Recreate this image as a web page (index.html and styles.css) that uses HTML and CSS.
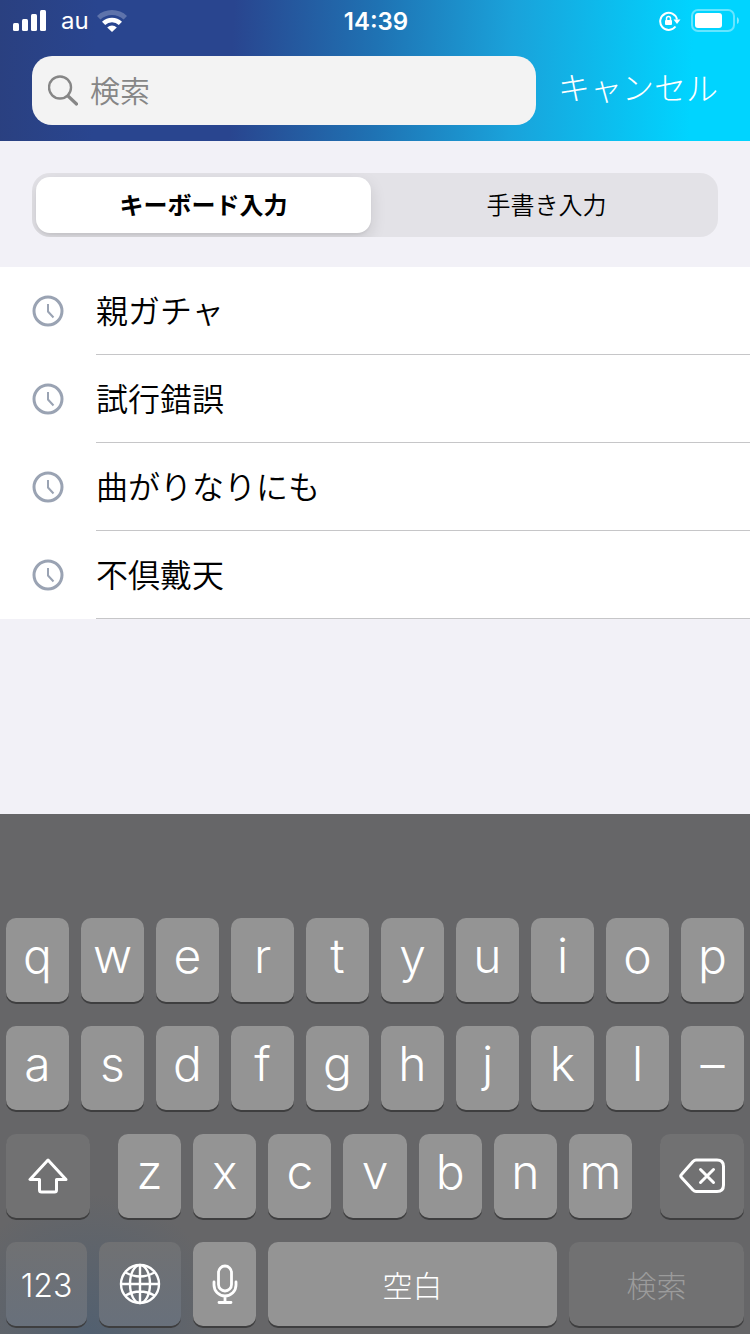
FILE: index.html
```html
<!DOCTYPE html>
<html lang="ja">
<head>
	<meta charset="UTF-8">
	<meta name="viewport" content="width=device-width">
	<title>検索</title>
	<link rel="stylesheet" href="styles.css">
</head>
<body>
	<header class="header">
		<div class="status">
			<div class="status-left">
				<svg width="34" height="22" viewBox="0 0 34 22" fill="#fff">
					<rect x="0" y="13" width="6" height="8" rx="1.500"/>
					<rect x="9" y="9" width="6" height="12" rx="1.500"/>
					<rect x="18" y="4" width="6" height="17" rx="1.500"/>
					<rect x="27" y="0" width="6" height="21" rx="1.500"/>
				</svg>
				<span class="carrier">au</span>
				<svg width="30" height="22" viewBox="0 0 30 22" fill="#fff">
					<path d="M0 6A22 22 0 0 1 30 6L26.600 9.600A17 17 0 0 0 3.400 9.600z" opacity=".25"/>
					<path d="M5 11.800A14.500 14.500 0 0 1 25 11.800L21.800 15.100A9.500 9.500 0 0 0 8.200 15.100z"/>
					<path d="M15 22l-4.800-4.500a7 7 0 0 1 9.600 0z"/>
				</svg>
			</div>
			<time class="clock">14:39</time>
			<div class="status-right">
				<svg width="22" height="20" viewBox="0 0 22 20" fill="none" stroke="#fff" stroke-width="2">
					<path d="M16.500 15.500A8.500 8.500 0 1 1 18 8.500"/>
					<path d="M14.500 8.500h7L18 13z" fill="#fff" stroke="none"/>
					<rect x="6" y="9" width="7" height="5" rx="1" fill="#fff" stroke="none"/>
					<path d="M7.500 9.500V7.500a2 2 0 0 1 4 0v2" stroke-width="1.500"/>
				</svg>
				<svg width="48" height="24" viewBox="0 0 48 24">
					<rect x="1" y="1" width="42" height="21" rx="6" fill="none" stroke="#fff" stroke-width="2" opacity=".4"/>
					<rect x="4" y="4" width="27" height="15" rx="3" fill="#fff"/>
					<path d="M46 8q2 1 2 3.500T46 15z" fill="#fff" opacity=".5"/>
				</svg>
			</div>
		</div>
		<form class="search" role="search">
			<label class="search-box">
				<svg width="30" height="32" viewBox="0 0 30 32" fill="none" stroke="#868686" stroke-linecap="round">
					<circle cx="12" cy="12.500" r="11" stroke-width="2.400"/>
					<path d="M20 21l8.500 8" stroke-width="3.200"/>
				</svg>
				<input type="text" placeholder="検索" aria-label="検索">
			</label>
			<button type="button" class="cancel">キャンセル</button>
		</form>
	</header>

	<main>
		<div class="segment">
			<button type="button" class="active">キーボード入力</button>
			<button type="button">手書き入力</button>
		</div>
		<ul class="history">
			<li>
				<svg class="history-icon" viewBox="0 0 32 32"><circle cx="16" cy="16" r="14"/><path d="M16 9v7.500l5.500 6"/></svg>
				<a href="#">親ガチャ</a>
			</li>
			<li>
				<svg class="history-icon" viewBox="0 0 32 32"><circle cx="16" cy="16" r="14"/><path d="M16 9v7.500l5.500 6"/></svg>
				<a href="#">試行錯誤</a>
			</li>
			<li>
				<svg class="history-icon" viewBox="0 0 32 32"><circle cx="16" cy="16" r="14"/><path d="M16 9v7.500l5.500 6"/></svg>
				<a href="#">曲がりなりにも</a>
			</li>
			<li>
				<svg class="history-icon" viewBox="0 0 32 32"><circle cx="16" cy="16" r="14"/><path d="M16 9v7.500l5.500 6"/></svg>
				<a href="#">不倶戴天</a>
			</li>
		</ul>
	</main>

	<div class="keyboard">
		<div class="row">
			<button class="key">q</button>
			<button class="key">w</button>
			<button class="key">e</button>
			<button class="key">r</button>
			<button class="key">t</button>
			<button class="key">y</button>
			<button class="key">u</button>
			<button class="key">i</button>
			<button class="key">o</button>
			<button class="key">p</button>
		</div>
		<div class="row">
			<button class="key">a</button>
			<button class="key">s</button>
			<button class="key">d</button>
			<button class="key">f</button>
			<button class="key">g</button>
			<button class="key">h</button>
			<button class="key">j</button>
			<button class="key">k</button>
			<button class="key">l</button>
			<button class="key">–</button>
		</div>
		<div class="row row-shift">
			<button class="key dark" aria-label="シフト">
				<svg width="40" height="36" viewBox="0 0 40 36" fill="none" stroke="#fff" stroke-width="3" stroke-linejoin="round">
					<path d="M20 2L2 21.500h9.500V32q0 2 2 2h13q2 0 2-2V21.500H38z"/>
				</svg>
			</button>
			<div class="row">
				<button class="key">z</button>
				<button class="key">x</button>
				<button class="key">c</button>
				<button class="key">v</button>
				<button class="key">b</button>
				<button class="key">n</button>
				<button class="key">m</button>
			</div>
			<button class="key dark" aria-label="削除">
				<svg width="46" height="36" viewBox="0 0 46 36" fill="none" stroke="#fff" stroke-width="3" stroke-linejoin="round" stroke-linecap="round">
					<path d="M17 2h21q6.500 0 6.500 6.500v18.500q0 6.500-6.500 6.500H17q-1.500 0-3-1.500L2.500 19.500q-1.500-1.500 0-3L14 3.500Q15.500 2 17 2z"/>
					<path d="M21.500 11.500l13 13M34.500 11.500l-13 13"/>
				</svg>
			</button>
		</div>
		<div class="row row-bottom">
			<button class="key dark num">123</button>
			<button class="key dark" aria-label="キーボード切替">
				<svg width="42" height="42" viewBox="0 0 42 42" fill="none" stroke="#fff" stroke-width="2.400">
					<circle cx="21" cy="21" r="19"/>
					<ellipse cx="21" cy="21" rx="10" ry="19"/>
					<path d="M21 2v38M2 21h38M6.500 9.500q14.500 8 29 0M6.500 32.500q14.500-8 29 0"/>
				</svg>
			</button>
			<button class="key" aria-label="音声入力">
				<svg width="26" height="40" viewBox="0 0 26 40" fill="none" stroke="#fff" stroke-width="2.800" stroke-linecap="round">
					<rect x="6.500" y="2" width="13" height="25" rx="6.500"/>
					<path d="M2 18v3a11 11 0 0 0 22 0v-3M13 32v6M7 38.500h12"/>
				</svg>
			</button>
			<button class="key word">空白</button>
			<button class="key dark word" disabled>検索</button>
		</div>
	</div>
</body>
</html>
```

FILE: styles.css
```css
*{
	box-sizing: border-box;
}
body{
	margin: 0;
	min-height: 100vh;
	display: flex;
	flex-direction: column;
	background: #f2f1f7;
	font-family: Inter, "Noto Sans CJK JP", sans-serif;
	font-weight: 350;
	color: #000;
}
button, input{
	font: inherit;
	color: inherit;
	border: none;
	padding: 0;
	margin: 0;
	background: none;
}
svg{
	display: block;
	flex: none;
}

/* header */
.header{
	padding-bottom: 16px;
	background: linear-gradient(92deg, #2a4080 0%, #29458f 13%, #29458f 31%, #1f72b3 50%, #1aa2da 68%, #00d4ff 92%);
	color: #fff;
}
.status{
	display: grid;
	grid-template-columns: 1fr auto 1fr;
	align-items: center;
	height: 40px;
	margin-bottom: 16px;
	padding: 0 11px 0 13px;
}
.status-left, .status-right{
	display: flex;
	align-items: center;
	gap: 10px;
}
.status-left{
	gap: 8px;
}
.status-right{
	justify-content: flex-end;
}
.carrier, .clock{
	font-size: 24px;
	line-height: 40px;
}
.carrier{
	margin-left: 6px;
	font-weight: 400;
}
.clock{
	padding-top: 2px;
	font-weight: 600;
}
.search{
	display: flex;
	gap: 22px;
	padding: 0 32px;
}
.search-box{
	flex: 1;
	min-width: 0;
	display: flex;
	align-items: center;
	gap: 12px;
	height: 69px;
	padding: 0 16px;
	border-radius: 20px;
	background: #f3f3f3;
}
.search-box input{
	flex: 1;
	min-width: 0;
	height: 48px;
	font-size: 30px;
	color: #333;
	outline: none;
}
.search-box input::placeholder{
	color: #868686;
	opacity: 1;
}
.cancel{
	flex: none;
	height: 64px;
	padding-bottom: 4px;
	font-size: 32px;
	font-weight: 300;
	white-space: nowrap;
}

/* input mode */
.segment{
	display: grid;
	grid-template-columns: 1fr 1fr;
	gap: 8px;
	height: 64px;
	margin: 32px 32px 30px;
	padding: 4px;
	border-radius: 18px;
	background: #e3e2e7;
	overflow: hidden;
}
.segment button{
	padding-bottom: 4px;
	border-radius: 14px;
	font-size: 24px;
}
.segment .active{
	background: #fff;
	font-weight: 700;
	box-shadow: 0 6px 16px rgba(0,0,0,0.12), 0 2px 2px rgba(0,0,0,0.04);
}

/* history */
.history{
	margin: 0;
	padding: 0;
	list-style: none;
	background: #fff;
}
.history li{
	display: flex;
	align-items: center;
	gap: 32px;
	padding-left: 32px;
}
.history-icon{
	width: 32px;
	height: 32px;
	fill: none;
	stroke: #9aa3b3;
	stroke-width: 3;
}
.history-icon path{
	stroke-width: 2;
}
.history a{
	flex: 1;
	height: 88px;
	line-height: 90px;
	border-bottom: 1px solid #c6c6c8;
	font-size: 32px;
	color: #000;
	text-decoration: none;
}

/* keyboard */
.keyboard{
	display: flex;
	flex-direction: column;
	gap: 24px;
	margin-top: auto;
	padding: 104px 6px 8px;
	background: radial-gradient(circle 140px at 90px 100%, #526070, rgba(82,96,112,0)), #666668;
	color: #fff;
}
.row{
	display: flex;
	gap: 12px;
}
.row .row{
	flex: 1;
}
.row-shift{
	gap: 28px;
}
.row-shift > .dark{
	flex: 0 0 84px;
}
.row-bottom{
	display: grid;
	grid-template-columns: 81fr 82fr 63fr 289fr 175fr;
}
.key{
	flex: 1 1 0;
	min-width: 0;
	display: flex;
	align-items: center;
	justify-content: center;
	height: 84px;
	padding-bottom: 8px;
	border-radius: 10px;
	background: #949494;
	box-shadow: 0 2px 0 #3e3e3f;
	font-size: 48px;
	line-height: 60px;
}
.key.dark{
	background: #717172;
}
.row-bottom .key, .key.dark{
	padding-bottom: 0;
}
.row-bottom .dark:not(:disabled){
	background: linear-gradient(#707173, #68707b);
}
.row-bottom .num, .row-bottom .word{
	padding-top: 4px;
}
.key.num{
	font-size: 32px;
}
.key.word{
	font-size: 30px;
	font-weight: 300;
}
.key:disabled{
	color: #9b9b9b;
}
```
